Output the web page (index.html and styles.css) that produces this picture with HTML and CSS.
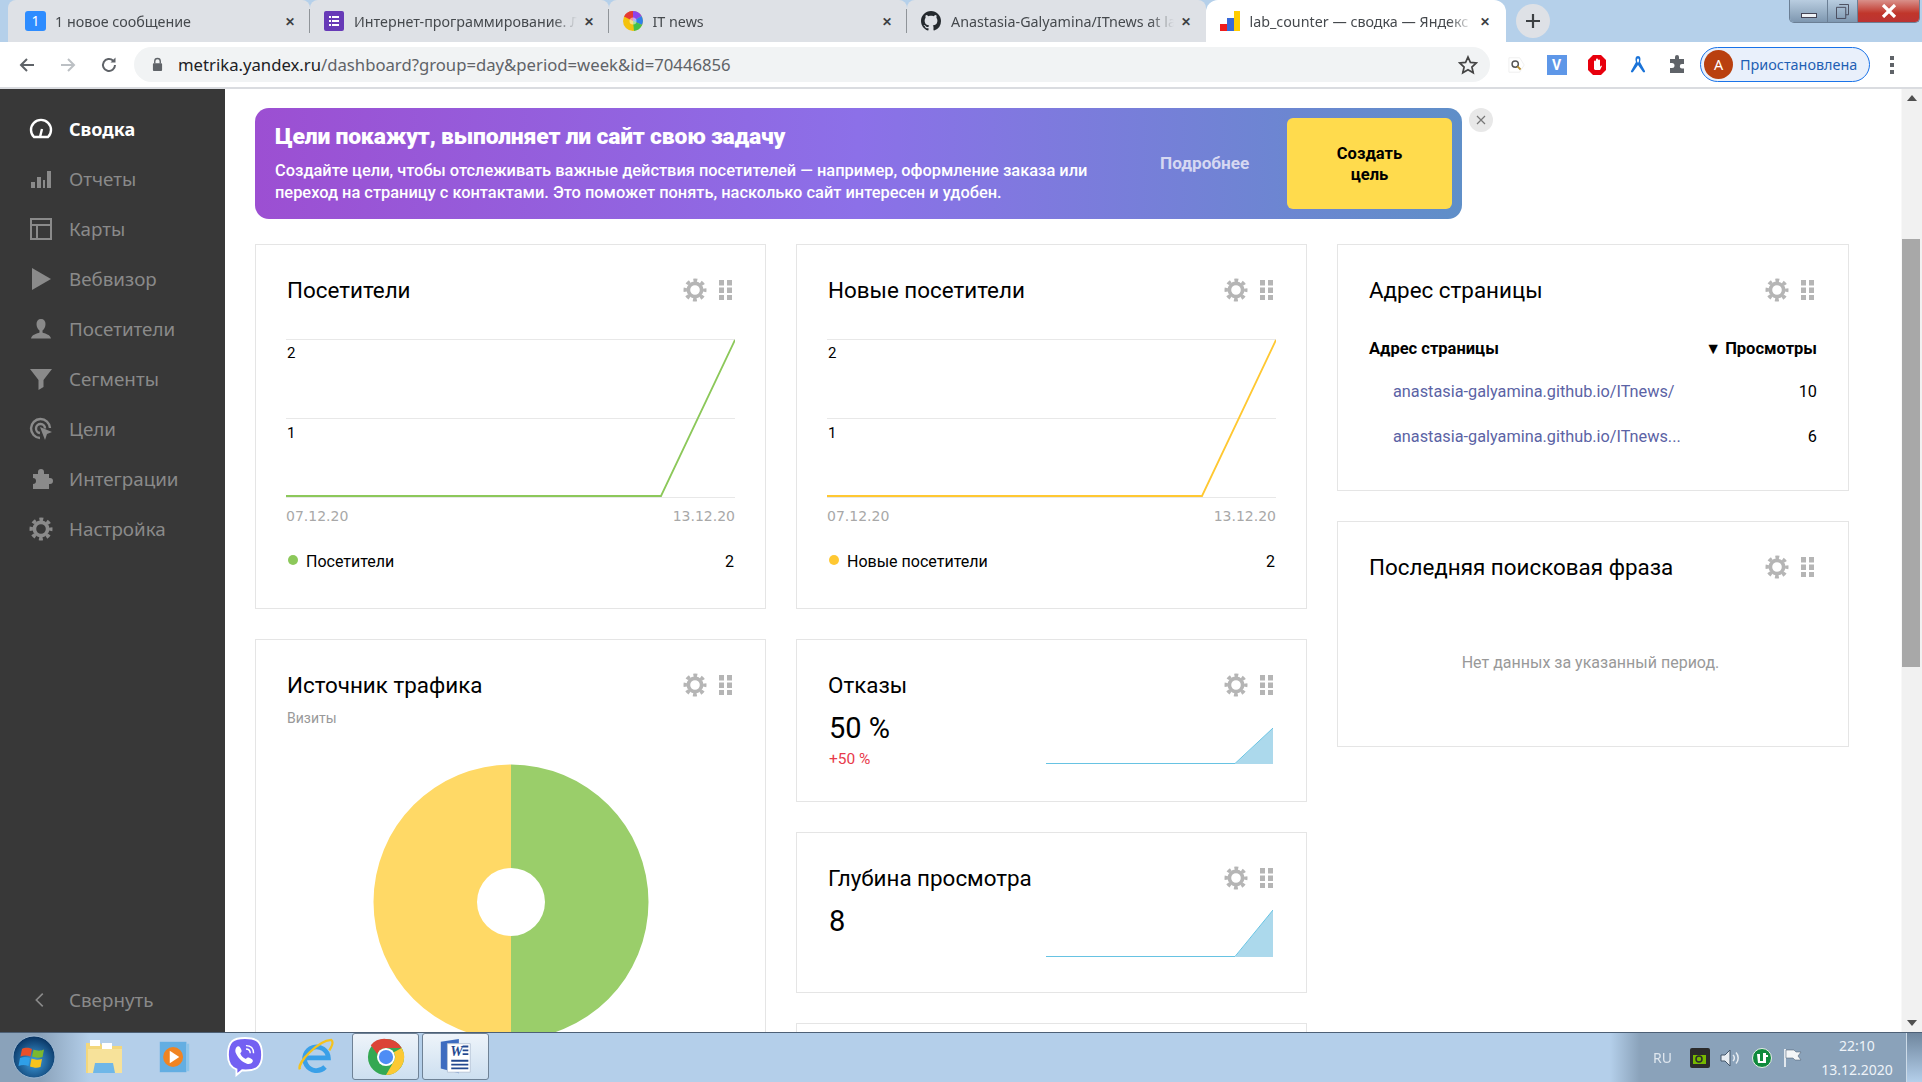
FILE: index.html
```html
<!DOCTYPE html>
<html lang="ru">
<head>
<meta charset="utf-8">
<title>lab_counter — сводка — Яндекс.Метрика</title>
<link rel="stylesheet" href="styles.css">
</head>
<body>
<svg class="defs" width="0" height="0">
  <symbol id="gear" viewBox="0 0 24 24">
    <circle cx="12" cy="12" r="6.6" fill="none" stroke="currentColor" stroke-width="3.6"/>
    <circle cx="12" cy="12" r="9.8" fill="none" stroke="currentColor" stroke-width="3.4" stroke-dasharray="3.9 3.8" stroke-dashoffset="1.95"/>
  </symbol>
  <symbol id="grip" viewBox="0 0 13 20">
    <path fill="currentColor" d="M0 0h5v5.500H0zM8 0h5v5.500H8zM0 7.500h5V13H0zM8 7.500h5V13H8zM0 15h5v5H0zM8 15h5v5H8z"/>
  </symbol>
</svg>

<header class="tabstrip">
  <div class="tab tab-first">
    <span class="fav fav-msg">1</span>
    <span class="tab-text">1 новое сообщение</span>
    <span class="tab-x">✕</span>
  </div>
  <div class="tab">
    <svg class="fav" viewBox="0 0 20 20"><rect width="20" height="20" rx="2" fill="#673ab7"/><path d="M5 5h2v2H5zM8 5h7v2H8zM5 9h2v2H5zM8 9h7v2H8zM5 13h2v2H5zM8 13h7v2H8z" fill="#fff"/></svg>
    <span class="tab-text">Интернет-программирование. Л</span>
    <span class="tab-x">✕</span>
  </div>
  <div class="tab">
    <svg class="fav" viewBox="0 0 20 20"><circle cx="10" cy="10" r="10" fill="#f4c20d"/><path d="M10 10V0a10 10 0 0 0-9 5.500z" fill="#e53935"/><path d="M10 10V0a10 10 0 0 1 8.600 5z" fill="#8e44ec"/><path d="M10 10l8.600-5A10 10 0 0 1 19 14z" fill="#2f80ed"/><path d="M10 10l9 4a10 10 0 0 1-8 6z" fill="#43c04b"/><circle cx="10" cy="10" r="3.500" fill="#fff" opacity=".5"/></svg>
    <span class="tab-text">IT news</span>
    <span class="tab-x">✕</span>
  </div>
  <div class="tab tab-last">
    <svg class="fav" viewBox="0 0 16 16"><path fill="#24292e" d="M8 0C3.580 0 0 3.580 0 8c0 3.540 2.290 6.530 5.470 7.590.4.070.55-.17.55-.38 0-.19-.01-.82-.01-1.490-2.010.37-2.530-.49-2.690-.94-.09-.23-.48-.94-.82-1.130-.28-.15-.68-.52-.01-.53.630-.01 1.080.58 1.230.82.720 1.210 1.870.87 2.330.66.070-.52.280-.87.510-1.070-1.780-.2-3.640-.89-3.640-3.950 0-.87.310-1.590.820-2.150-.08-.2-.36-1.020.08-2.120 0 0 .67-.21 2.200.82.640-.18 1.320-.27 2-.27s1.360.09 2 .27c1.530-1.040 2.200-.82 2.200-.82.440 1.100.16 1.920.08 2.120.510.560.820 1.270.820 2.150 0 3.070-1.870 3.750-3.650 3.950.290.250.540.730.540 1.480 0 1.070-.01 1.930-.01 2.200 0 .210.150.460.550.380A8.010 8.010 0 0 0 16 8c0-4.420-3.580-8-8-8z"/></svg>
    <span class="tab-text">Anastasia-Galyamina/ITnews at la</span>
    <span class="tab-x">✕</span>
  </div>
  <div class="tab tab-active">
    <svg class="fav" viewBox="0 0 20 20"><rect x="0" y="13" width="7" height="7" fill="#f01c1c"/><rect x="7" y="7" width="7" height="13" fill="#3869d8"/><rect x="14" y="0" width="6" height="20" fill="#ffcc00"/></svg>
    <span class="tab-text">lab_counter — сводка — Яндекс</span>
    <span class="tab-x">✕</span>
  </div>
  <div class="newtab">
    <svg viewBox="0 0 16 16" width="16" height="16"><path d="M8 1v14M1 8h14" stroke="#3c4043" stroke-width="2.200"/></svg>
  </div>
  <div class="winbtns">
    <span class="winbtn win-min"><i></i></span>
    <span class="winbtn win-max"><svg viewBox="0 0 14 16" width="13" height="15"><path d="M3.500 .5h10v11h-3M.5 3.500h10v12H.5z" fill="none" stroke="#445"/></svg></span>
    <span class="winbtn win-close"><svg viewBox="0 0 16 14" width="16" height="14"><path d="M2 1l12 12M14 1L2 13" stroke="#fff" stroke-width="3.200"/></svg></span>
  </div>
</header>

<div class="toolbar">
  <svg class="nav-ic" viewBox="0 0 18 18"><path d="M16 9H3M9 3L3 9l6 6" fill="none" stroke="#5f6368" stroke-width="2"/></svg>
  <svg class="nav-ic" viewBox="0 0 18 18"><path d="M2 9h13M9 3l6 6-6 6" fill="none" stroke="#bcc0c4" stroke-width="2"/></svg>
  <svg class="nav-ic" viewBox="0 0 18 18"><path d="M15 9a6 6 0 1 1-1.800-4.300" fill="none" stroke="#5f6368" stroke-width="2"/><path d="M15.500 1.500v5h-5z" fill="#5f6368"/></svg>
  <div class="omnibox">
    <svg class="lock" viewBox="0 0 12 16" width="11" height="15"><path d="M3 7V4.500a3 3 0 0 1 6 0V7" fill="none" stroke="#5f6368" stroke-width="1.500"/><rect x="1" y="6.500" width="10" height="8.500" rx="1" fill="#5f6368"/></svg>
    <span class="url"><b>metrika.yandex.ru</b>/dashboard?group=day&amp;period=week&amp;id=70446856</span>
    <svg class="star" viewBox="0 0 20 20" width="20" height="20"><path d="M10 2l2.400 5.400 5.900.6-4.400 4 1.300 5.800L10 14.800l-5.200 3 1.300-5.800-4.400-4 5.900-.6z" fill="none" stroke="#444" stroke-width="1.700"/></svg>
  </div>
  <div class="exts">
    <svg viewBox="0 0 20 20" width="18" height="20"><path d="M1 2h12l5 8-5 8H1z" fill="#fff" stroke="#eee"/><circle cx="8" cy="9" r="3.500" fill="none" stroke="#555" stroke-width="1.600"/><path d="M10.500 11.500L14 15" stroke="#b98f2e" stroke-width="2"/></svg>
    <span class="ext-v">V</span>
    <svg viewBox="0 0 20 22" width="20" height="22"><path d="M6 1h8l5 5v10l-5 5H6l-5-5V6z" fill="#e8000d"/><path d="M7 15V7.500a1 1 0 0 1 2 0V10V5.500a1 1 0 0 1 2 0V10V6.500a1 1 0 0 1 2 0V13l1-1.500 1 .5-2 4H8z" fill="#fff"/></svg>
    <svg viewBox="0 0 20 22" width="20" height="22"><path d="M10 2c-2.500 0-3 3-2 6l-5 9c-.5 1 1 2 2 1l5-7 5 7c1 1 2.500 0 2-1l-5-9c1-3 .5-6-2-6z" fill="#1a73d8"/><path d="M10 4.500c-1 0-1.300 1.500-.8 3l.8 1.500.8-1.500c.5-1.500.2-3-.8-3z" fill="#fff"/></svg>
    <svg viewBox="0 0 20 20" width="20" height="20"><path d="M7 2a2 2 0 0 1 4 0v2h5v5h-2a2.200 2.200 0 0 0 0 4.400h2V18H2v-5h2a2.500 2.500 0 0 0 0-5H2V4h5z" fill="#5f6368"/></svg>
  </div>
  <div class="profile"><span class="avatar">A</span><span class="profile-text">Приостановлена</span></div>
  <svg class="menu" viewBox="0 0 4 18" width="4" height="18"><path d="M0 0h4v4H0zM0 7h4v4H0zM0 14h4v4H0z" fill="#5f6368"/></svg>
</div>

<div class="page">
  <nav class="sidebar">
    <a class="nav-item active"><svg class="sic" viewBox="0 0 24 24"><path d="M5 20h14a10 10 0 1 0-14 0zM11 20l2-8" fill="none" stroke="#fff" stroke-width="2.400"/></svg>Сводка</a>
    <a class="nav-item"><svg class="sic" viewBox="0 0 24 24"><path d="M2 15h4v6H2zM8 10h4v11H8zM14 13h2v8h-2zM18 4h4v17h-4z" fill="#8a8a8a"/></svg>Отчеты</a>
    <a class="nav-item"><svg class="sic" viewBox="0 0 24 24"><path d="M2 2h20v20H2zM2 8h20M8 8v14" fill="none" stroke="#8a8a8a" stroke-width="2"/></svg>Карты</a>
    <a class="nav-item"><svg class="sic" viewBox="0 0 24 24"><path d="M3 1l19 11L3 23z" fill="#8a8a8a"/></svg>Вебвизор</a>
    <a class="nav-item"><svg class="sic" viewBox="0 0 24 24"><path d="M12 2c3 0 4.500 2 4.500 5s-1.500 5.500-3 6.500v2c2 1 8 2 8.500 6H2c.5-4 6.500-5 8.500-6v-2c-1.500-1-3-3.500-3-6.500S9 2 12 2z" fill="#8a8a8a"/></svg>Посетители</a>
    <a class="nav-item"><svg class="sic" viewBox="0 0 24 24"><path d="M1 2h22l-8.500 11v7l-5 3V13z" fill="#8a8a8a"/></svg>Сегменты</a>
    <a class="nav-item"><svg class="sic" viewBox="0 0 24 24"><path d="M21 11A9.500 9.500 0 1 0 11 21M16 11.500A4.500 4.500 0 1 0 11 16" fill="none" stroke="#8a8a8a" stroke-width="2.400"/><path d="M11 10l12 5-5 2-2 6z" fill="#8a8a8a"/></svg>Цели</a>
    <a class="nav-item"><svg class="sic" viewBox="0 0 24 24"><path d="M4 7h5V5a3 3 0 0 1 6 0v2h5v4h1a3 3 0 0 1 0 6h-1v5H4v-5a3 3 0 0 0 0-6z" fill="#8a8a8a"/></svg>Интеграции</a>
    <a class="nav-item"><svg class="sic" viewBox="0 0 24 24"><use href="#gear" color="#8a8a8a"/></svg>Настройка</a>
    <a class="nav-item nav-collapse"><svg class="sic chev" viewBox="0 0 24 24"><path d="M15 5l-7 7 7 7" fill="none" stroke="#8a8a8a" stroke-width="1.800"/></svg>Свернуть</a>
  </nav>

  <main class="main">
    <div class="promo-row">
      <section class="promo">
        <div class="promo-copy">
          <h2 class="promo-title">Цели покажут, выполняет ли сайт свою задачу</h2>
          <p class="promo-text">Создайте цели, чтобы отслеживать важные действия посетителей — например, оформление заказа или переход на страницу с контактами. Это поможет понять, насколько сайт интересен и удобен.</p>
        </div>
        <a class="promo-more">Подробнее</a>
        <a class="promo-btn">Создать<br>цель</a>
      </section>
      <span class="promo-close"><svg viewBox="0 0 10 10" width="10" height="10"><path d="M1 1l8 8M9 1L1 9" stroke="#777" stroke-width="1.200"/></svg></span>
    </div>

    <div class="grid">
      <div class="col">
        <section class="card card-chart">
          <div class="card-head"><h3>Посетители</h3><div class="tools"><svg class="gear"><use href="#gear"/></svg><svg class="grip"><use href="#grip"/></svg></div></div>
          <div class="chart">
            <svg viewBox="0 0 449 160" width="449" height="160">
              <path d="M0 .5h449M0 79.500h449M0 158.500h449" stroke="#e8e8e8" fill="none"/>
              <path d="M0 157h375L449 1" stroke="#8cc85a" stroke-width="1.800" fill="none"/>
            </svg>
            <span class="y y2">2</span><span class="y y1">1</span>
          </div>
          <div class="dates"><span>07.12.20</span><span>13.12.20</span></div>
          <div class="legend"><i class="dot dot-green"></i><span class="legend-name">Посетители</span><span>2</span></div>
        </section>
        <section class="card card-pie">
          <div class="card-head"><h3>Источник трафика</h3><div class="tools"><svg class="gear"><use href="#gear"/></svg><svg class="grip"><use href="#grip"/></svg></div></div>
          <div class="sub">Визиты</div>
          <svg class="donut" viewBox="0 0 276 276" width="276" height="276">
            <path d="M138 .5a137.500 137.500 0 0 0 0 275V172a34 34 0 0 1 0-68z" fill="#ffd966"/>
            <path d="M138 .5a137.500 137.500 0 0 1 0 275V172a34 34 0 0 0 0-68z" fill="#9ace6a"/>
          </svg>
        </section>
      </div>

      <div class="col">
        <section class="card card-chart">
          <div class="card-head"><h3>Новые посетители</h3><div class="tools"><svg class="gear"><use href="#gear"/></svg><svg class="grip"><use href="#grip"/></svg></div></div>
          <div class="chart">
            <svg viewBox="0 0 449 160" width="449" height="160">
              <path d="M0 .5h449M0 79.500h449M0 158.500h449" stroke="#e8e8e8" fill="none"/>
              <path d="M0 157h375L449 1" stroke="#ffc832" stroke-width="1.800" fill="none"/>
            </svg>
            <span class="y y2">2</span><span class="y y1">1</span>
          </div>
          <div class="dates"><span>07.12.20</span><span>13.12.20</span></div>
          <div class="legend"><i class="dot dot-yellow"></i><span class="legend-name">Новые посетители</span><span>2</span></div>
        </section>
        <section class="card card-metric">
          <div class="card-head"><h3>Отказы</h3><div class="tools"><svg class="gear"><use href="#gear"/></svg><svg class="grip"><use href="#grip"/></svg></div></div>
          <div class="metric-body">
            <div><div class="metric-value">50 %</div><div class="metric-delta">+50 %</div></div>
            <svg class="spark" viewBox="0 0 227 36" width="227" height="36"><path d="M189 36L227 0v36z" fill="#acd9ec"/><path d="M0 35.500h189L227 0" fill="none" stroke="#67c3e3"/></svg>
          </div>
        </section>
        <section class="card card-metric card-metric-b">
          <div class="card-head"><h3>Глубина просмотра</h3><div class="tools"><svg class="gear"><use href="#gear"/></svg><svg class="grip"><use href="#grip"/></svg></div></div>
          <div class="metric-body">
            <div class="metric-value">8</div>
            <svg class="spark spark-tall" viewBox="0 0 227 47" width="227" height="47"><path d="M189 47L227 0v47z" fill="#acd9ec"/><path d="M0 46.500h189L227 0" fill="none" stroke="#67c3e3"/></svg>
          </div>
        </section>
        <section class="card card-next"></section>
      </div>

      <div class="col col-wide">
        <section class="card card-table">
          <div class="card-head"><h3>Адрес страницы</h3><div class="tools"><svg class="gear"><use href="#gear"/></svg><svg class="grip"><use href="#grip"/></svg></div></div>
          <div class="t-head"><span>Адрес страницы</span><span><i class="sort">▼</i> Просмотры</span></div>
          <div class="t-row"><a>anastasia-galyamina.github.io/ITnews/</a><span>10</span></div>
          <div class="t-row"><a>anastasia-galyamina.github.io/ITnews...</a><span>6</span></div>
        </section>
        <section class="card card-empty">
          <div class="card-head"><h3>Последняя поисковая фраза</h3><div class="tools"><svg class="gear"><use href="#gear"/></svg><svg class="grip"><use href="#grip"/></svg></div></div>
          <p class="empty">Нет данных за указанный период.</p>
        </section>
      </div>
    </div>
  </main>

  <aside class="scrollbar">
    <span class="sc-up"></span>
    <span class="sc-thumb"></span>
    <span class="sc-down"></span>
  </aside>
</div>

<footer class="taskbar">
  <svg class="orb" viewBox="0 0 44 44" width="44" height="44">
    <defs><radialGradient id="orbg" cx=".5" cy=".6" r=".6"><stop offset="0" stop-color="#3f9fe0"/><stop offset="1" stop-color="#07315f"/></radialGradient></defs>
    <circle cx="22" cy="22" r="21" fill="url(#orbg)" stroke="#9db8d2"/>
    <path d="M10 14c4-2 7-1 10 0l-1.500 7.500c-3-1-6-1.500-10 0z" fill="#e8502a"/>
    <path d="M21.500 14.500c3 1 6 2 10.500 0l-1.500 7.500c-4 1.500-7 .5-10.500-.5z" fill="#7cb82f"/>
    <path d="M8 23c4-1.500 7-1 10 0L16.500 31c-3-1-6-1.500-10 0z" fill="#2f9fe8"/>
    <path d="M19.500 23.500c3 1 6.500 2 10.500 .5L28.500 32c-4 1.500-7 .5-10.500-.5z" fill="#f7c31c"/>
  </svg>
  <span class="tb-ic">
    <svg viewBox="0 0 40 40" width="40" height="40"><path d="M2 6h14l3 3h19v27H2z" fill="#f3d77c"/><path d="M6 3h10v6H6zM18 6h10v6H18z" fill="#fff"/><path d="M4 12h34v24H4z" fill="#f7e29a"/><path d="M11 26h18l2 10H9z" fill="#6fb7e8"/></svg>
  </span>
  <span class="tb-ic">
    <svg viewBox="0 0 40 40" width="38" height="38"><path d="M4 4h28v32H4z" fill="#63aee2"/><path d="M32 6h3v29h-3z" fill="#8cc4ea"/><circle cx="18" cy="20" r="10.500" fill="#f08422"/><path d="M14.500 13.500l10 6.500-10 6.500z" fill="#fff"/></svg>
  </span>
  <span class="tb-ic">
    <svg viewBox="0 0 40 42" width="38" height="40"><path d="M20 1C8 1 2 4 2 19c0 9 3 13 9 15v6l6-5c14 1 21-3 21-16C38 4 32 1 20 1z" fill="#7360f2" stroke="#fff" stroke-width="2"/><path d="M12 10c2-1 3 1 4 3s0 3-1 4c1 3 3 5 6 6 1-1 2-2 4-1s4 2 3 4-4 3-6 2c-6-2-10-7-12-12-.5-2 0-5 2-6z" fill="#fff"/><path d="M21 9c5 0 8 3 8 8M21 12.500c3 0 4.500 2 4.500 4.500" fill="none" stroke="#fff" stroke-width="1.500"/></svg>
  </span>
  <span class="tb-ic">
    <svg viewBox="0 0 40 40" width="38" height="38"><path d="M9 21h24a12.500 12.500 0 1 0-3.500 9.500" fill="none" stroke="#3aa0e8" stroke-width="5"/><path d="M3 33C0 26 22 3 36 2c3 2 0 8-2 11" fill="none" stroke="#f4c21e" stroke-width="2.500"/></svg>
  </span>
  <span class="tb-btn">
    <svg viewBox="0 0 40 40" width="38" height="38">
      <circle cx="20" cy="20" r="19" fill="#34a853"/>
      <path d="M20 1a19 19 0 0 1 16.500 9.500H20a9.500 9.500 0 0 0-9 6.500L4 7.500A19 19 0 0 1 20 1z" fill="#db4437"/>
      <path d="M36.500 10.500A19 19 0 0 1 20 39l8.200-14.200A9.500 9.500 0 0 0 28.200 15z" fill="#fcc934"/>
      <circle cx="20" cy="20" r="9.500" fill="#fff"/><circle cx="20" cy="20" r="7.500" fill="#4e8df5"/>
    </svg>
  </span>
  <span class="tb-btn">
    <svg viewBox="0 0 40 40" width="40" height="38"><path d="M4 4l19-3v36L4 32z" fill="#3d6cc0"/><path d="M11 6h24v30H11z" fill="#fff" stroke="#b8c6d8"/><text class="word-w" x="14" y="19">W</text><path d="M27 8h6v2h-6zM27 12h6v2h-6zM27 16h6v2h-6zM15 23h18v2H15zM15 27h18v2H15zM15 31h18v2H15z" fill="#22488f"/></svg>
  </span>
  <div class="tray">
    <span class="tray-lang">RU</span>
    <svg viewBox="0 0 20 20" width="20" height="20"><rect width="20" height="20" rx="2" fill="#2b2b2b"/><path d="M3 7h13v9H3z" fill="#76b900"/><circle cx="9" cy="11" r="3" fill="none" stroke="#2b2b2b" stroke-width="1.500"/></svg>
    <svg viewBox="0 0 22 20" width="22" height="20"><path d="M1 7h4l5-5v16l-5-5H1z" fill="#e8edf2" stroke="#44566a"/><path d="M13 7a4 4 0 0 1 0 6M16 4.500a8 8 0 0 1 0 11" fill="none" stroke="#e8edf2" stroke-width="1.500"/></svg>
    <svg viewBox="0 0 20 20" width="20" height="20"><circle cx="10" cy="10" r="9.500" fill="#0f8a3c" stroke="#e8f0e8"/><path d="M5 6h3v7h3V5h3v2h2v2h-2v6H6z" fill="#fff"/></svg>
    <svg viewBox="0 0 20 20" width="20" height="20"><path d="M3 1v18" stroke="#fff" stroke-width="1.500"/><path d="M4 2h8l2 2h5l-3 4 3 4h-6l-2-2H4z" fill="#f4f6f8" stroke="#44566a" stroke-width=".5"/></svg>
    <div class="clock"><span>22:10</span><span>13.12.2020</span></div>
    <span class="show-desktop"></span>
  </div>
</footer>
</body>
</html>
```
FILE: styles.css
```css
* { box-sizing: border-box; }
html, body { margin: 0; height: 100%; }
body {
  width: 1922px;
  height: 1082px;
  overflow: hidden;
  display: flex;
  flex-direction: column;
  background: #fff;
  font-family: Roboto, "Liberation Sans", sans-serif;
  color: #000;
}
.defs { position: absolute; }
svg { flex: none; display: block; }

/* Browser chrome */
.tabstrip {
  height: 42px;
  flex: none;
  display: flex;
  align-items: stretch;
  padding-left: 8px;
  background: #b5d0ea;
  font-family: "Noto Sans", "Open Sans", sans-serif;
  font-size: 14.3px;
  color: #45494d;
}
.tab {
  position: relative;
  width: 298.5px;
  display: flex;
  align-items: center;
  padding: 0 8px 0 14px;
  background: #dee1e6;
  border-radius: 8px 8px 0 0;
}
.tab::after {
  content: "";
  position: absolute;
  right: 0;
  top: 9px;
  width: 1px;
  height: 24px;
  background: #8f9499;
}
.tab-first { width: 302px; padding-left: 17px; }
.tab-last::after, .tab-active::after { display: none; }
.tab-active {
  width: 300px;
  background: #fff;
  border-radius: 12px 12px 0 0;
  padding-right: 9px;
}
.fav { width: 20px; height: 20px; flex: none; margin-right: 10px; }
.fav-msg {
  width: 21px;
  background: #2d8cff;
  border-radius: 3px;
  color: #fff;
  font-size: 14px;
  line-height: 20px;
  text-align: center;
  margin-right: 9px;
}
.tab-text {
  flex: 1;
  min-width: 0;
  overflow: hidden;
  white-space: nowrap;
  -webkit-mask-image: linear-gradient(to left, transparent, #000 24px);
  mask-image: linear-gradient(to left, transparent, #000 24px);
}
.tab-x { width: 24px; flex: none; font-size: 12px; text-align: center; color: #3c4043; font-weight: 700; }
.newtab {
  width: 34px;
  height: 34px;
  margin: 4px 0 0 10px;
  border-radius: 50%;
  background: #dee1e6;
  display: flex;
  align-items: center;
  justify-content: center;
}
.winbtns {
  margin-left: auto;
  margin-right: 2px;
  display: flex;
  height: 23px;
  border: 1px solid #6b7f95;
  border-top: 0;
  border-radius: 0 0 5px 5px;
  overflow: hidden;
}
.winbtn { display: flex; align-items: center; justify-content: center; height: 100%; }
.win-min { width: 37px; background: linear-gradient(#b9cde0, #7e97b0); }
.win-min i { display: block; width: 16px; height: 5px; margin-top: 8px; background: #eef2f6; border: 1px solid #445; }
.win-max { width: 30px; background: linear-gradient(#b9cde0, #7e97b0); border-left: 1px solid #6b7f95; }
.win-close { width: 62px; background: linear-gradient(#d9908a, #c0362b 60%, #b33); border-left: 1px solid #6b7f95; }

.toolbar {
  height: 47px;
  flex: none;
  display: flex;
  align-items: center;
  padding: 0 0 0 18px;
  background: #fff;
  border-bottom: 2px solid #dadce0;
}
.nav-ic { width: 18px; height: 18px; margin-right: 23px; }
.omnibox {
  width: 1356px;
  height: 35px;
  margin-left: -7px;
  display: flex;
  align-items: center;
  padding: 0 12px 0 18px;
  border-radius: 18px;
  background: #f1f3f4;
  font-family: "Noto Sans", "Open Sans", sans-serif;
  font-size: 16.7px;
  color: #5f6368;
}
.url { margin-left: 15px; flex: 1; white-space: nowrap; }
.url b { font-weight: 400; color: #202124; }
.exts {
  display: flex;
  align-items: center;
  gap: 20.5px;
  margin-left: 18px;
}
.ext-v {
  width: 20px;
  height: 20px;
  background: #5e97e8;
  color: #fff;
  font-size: 14px;
  font-weight: 700;
  line-height: 20px;
  text-align: center;
}
.profile {
  width: 170px;
  height: 35px;
  margin-left: 12px;
  display: flex;
  align-items: center;
  padding-left: 3px;
  border: 1px solid #1a73e8;
  border-radius: 18px;
  background: #e9f0fb;
  font-family: "Noto Sans", "Open Sans", sans-serif;
  font-size: 14.4px;
  color: #1f5fb4;
}
.avatar {
  width: 29px;
  height: 29px;
  border-radius: 50%;
  background: #b9400f;
  color: #fff;
  text-align: center;
  line-height: 29px;
  margin-right: 7px;
}
.profile-text { white-space: nowrap; }
.menu { margin-left: 20px; }

/* Page */
.page { flex: 1; min-height: 0; display: flex; }
.sidebar {
  width: 225px;
  flex: none;
  display: flex;
  flex-direction: column;
  padding-top: 15px;
  background: #383838;
  font-family: "Noto Sans", "Open Sans", sans-serif;
  font-size: 18.8px;
  color: #8a8a8a;
}
.nav-item {
  height: 50px;
  display: flex;
  align-items: center;
  padding-left: 29px;
}
.nav-item.active { color: #fff; font-weight: 700; font-size: 18px; }
.sic { width: 24px; height: 24px; margin-right: 16px; }
.nav-collapse { margin-top: auto; margin-bottom: 7px; }
.chev { width: 22px; height: 22px; margin-right: 18px; }

.main {
  flex: 1;
  min-width: 0;
  overflow: hidden;
  padding: 19px 0 0 30px;
}
.promo-row { display: flex; gap: 7px; margin-bottom: 25px; }
.promo {
  width: 1207px;
  height: 111px;
  display: flex;
  align-items: center;
  padding: 0 10px 0 20px;
  border-radius: 14px;
  background: linear-gradient(90deg, #9c4fd2 0%, #8c70e8 50%, #5f8fc8 100%);
  color: #fff;
}
.promo-copy { width: 850px; }
.promo-title {
  margin: 0 0 9px;
  font-size: 22.9px;
  line-height: 28px;
  font-weight: 900;
  letter-spacing: -.2px;
  white-space: nowrap;
}
.promo-text {
  margin: 0;
  font-size: 16.4px;
  line-height: 22px;
  font-weight: 500;
}
.promo-more { margin: -2px 0 0 35px; font-size: 17.2px; font-weight: 700; color: #d6d8f2; }
.promo-btn {
  width: 165px;
  height: 91px;
  margin-left: auto;
  display: flex;
  align-items: center;
  justify-content: center;
  text-align: center;
  border-radius: 6px;
  background: #ffdb4d;
  color: #000;
  font-size: 16.5px;
  line-height: 21px;
  font-weight: 700;
}
.promo-close {
  width: 24px;
  height: 24px;
  border-radius: 50%;
  background: #e8e8e8;
  display: flex;
  align-items: center;
  justify-content: center;
}

.grid { display: flex; gap: 30px; align-items: flex-start; }
.col { width: 511px; flex: none; display: flex; flex-direction: column; gap: 30px; }
.col-wide { width: 512px; }
.card {
  flex: none;
  position: relative;
  padding: 30px 31px 0;
  background: #fff;
  border: 1px solid #e5e5e5;
}
.card-chart { height: 365px; }
.card-pie { height: 600px; }
.card-metric { height: 163px; }
.card-metric-b { height: 161px; }
.card-next { height: 200px; }
.card-table { height: 247px; }
.card-empty { height: 226px; }

.card-head {
  display: flex;
  align-items: center;
  justify-content: space-between;
  height: 30px;
}
.card-head h3 { margin: -1px 0 0; font-size: 22.4px; line-height: 30px; font-weight: 400; white-space: nowrap; }
.tools { display: flex; align-items: center; gap: 12px; margin-right: 2px; color: #b5b5b5; }
.col-wide .tools { margin-right: 3px; }
.gear { width: 24px; height: 24px; }
.grip { width: 13px; height: 20px; }

.chart { position: relative; margin: 34px 0 0 -1px; height: 160px; }
.y { position: absolute; left: 1px; font-size: 15px; line-height: 18px; }
.y2 { top: 5px; }
.y1 { top: 85px; }
.dates {
  display: flex;
  justify-content: space-between;
  margin: 8px -1px 0 -1px;
  font-family: "DejaVu Sans", sans-serif;
  font-size: 14px;
  line-height: 18px;
  color: #a8a8a8;
}
.legend {
  display: flex;
  align-items: center;
  margin-top: 28px;
  font-size: 16px;
  line-height: 18px;
}
.dot { width: 10px; height: 10px; border-radius: 50%; margin: -4px 8px 0 1px; }
.dot-green { background: #8cc85a; }
.dot-yellow { background: #ffc832; }
.legend-name { flex: 1; }

.sub { margin-top: 9px; font-size: 14px; line-height: 18px; color: #999; }
.donut { margin: 37px auto 0; }

.metric-body { display: flex; justify-content: space-between; align-items: flex-start; margin-top: 11px; }
.metric-value { font-size: 29px; line-height: 34px; margin-left: 1px; }
.metric-delta { font-size: 15.5px; line-height: 18px; margin: 5px 0 0 1px; color: #e8394a; }
.spark { margin: 17px 2px 0 0; }
.spark-tall { margin-top: 6px; }

.t-head {
  display: flex;
  justify-content: space-between;
  margin: 34px 0 -1px;
  font-size: 16.5px;
  line-height: 20px;
  font-weight: 700;
}
.sort { font-style: normal; font-size: 16px; }
.t-row {
  display: flex;
  justify-content: space-between;
  margin-top: 23px;
  padding-left: 24px;
  font-size: 16.3px;
  line-height: 22px;
}
.t-row a { color: #5b63a5; }
.empty { margin: 71px 0 0; padding-right: 5px; text-align: center; font-size: 16px; line-height: 20px; color: #999; }

.scrollbar {
  width: 21px;
  flex: none;
  position: relative;
  background: #f1f1f1;
  border-left: 1px solid #f8f8f8;
}
.sc-thumb {
  display: block;
  width: 18px;
  height: 428px;
  margin: 150px 0 0 0;
  background: #a8a8a8;
}
.sc-up, .sc-down { position: absolute; left: 5px; width: 0; height: 0; border: 5px solid transparent; }
.sc-up { top: 6px; border-bottom: 6px solid #505050; border-top: 0; }
.sc-down { bottom: 6px; border-top: 6px solid #505050; border-bottom: 0; }

/* Windows taskbar */
.taskbar {
  height: 50px;
  flex: none;
  display: flex;
  align-items: center;
  padding-bottom: 2px;
  border-top: 1px solid #4d6076;
  background: linear-gradient(90deg, #8aa2ba 0, #8aa2ba 40px, #b4cfea 90px, #b4cfea 1610px, #8aa2ba 1640px);
}
.orb { margin: 0 28px 0 12px; }
.tb-ic { width: 38px; margin-right: 33px; display: flex; justify-content: center; }
.tb-ic:nth-of-type(1) { margin-left: 1px; }
.tb-ic:nth-of-type(3) { margin-left: -1px; }
.tb-ic:nth-of-type(4) { margin-right: 17px; }
.tb-btn {
  width: 67px;
  height: 47px;
  margin-right: 3px;
  display: flex;
  align-items: center;
  justify-content: center;
  border: 1px solid #6f8296;
  border-radius: 3px;
  background: linear-gradient(#eef4fa, #cddff0);
}
.word-w { font-family: "Liberation Serif", serif; font-size: 15px; font-weight: 700; font-style: italic; fill: #22488f; }
.tray {
  margin-left: auto;
  align-self: flex-start;
  display: flex;
  align-items: center;
  gap: 10px;
  font-family: "Noto Sans", "Open Sans", sans-serif;
  font-size: 14px;
  color: #eef3f8;
}
.tray-lang { margin-right: 8px; opacity: .85; }
.clock {
  width: 74px;
  margin-left: 8px;
  display: flex;
  flex-direction: column;
  align-items: center;
  line-height: 24px;
}
.show-desktop {
  width: 16px;
  height: 49px;
  margin-left: 2px;
  background: linear-gradient(#6f869e, #b4cfea);
  border-left: 1px solid #cddbe8;
}
```
